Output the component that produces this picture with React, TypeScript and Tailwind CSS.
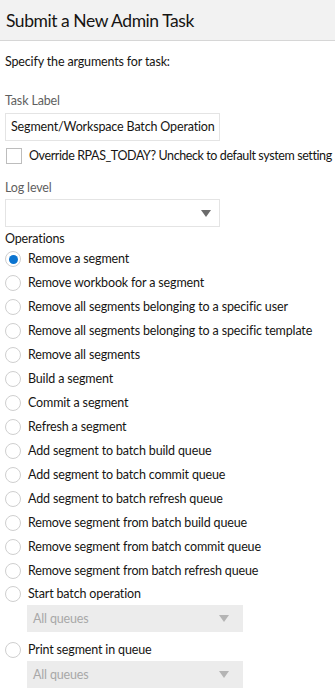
import { useState } from 'react'

const operations = [
  'Remove a segment',
  'Remove workbook for a segment',
  'Remove all segments belonging to a specific user',
  'Remove all segments belonging to a specific template',
  'Remove all segments',
  'Build a segment',
  'Commit a segment',
  'Refresh a segment',
  'Add segment to batch build queue',
  'Add segment to batch commit queue',
  'Add segment to batch refresh queue',
  'Remove segment from batch build queue',
  'Remove segment from batch commit queue',
  'Remove segment from batch refresh queue',
]

function Caret({ muted }: { muted?: boolean }) {
  return (
    <svg width="10" height="7" viewBox="0 0 10 7" className="shrink-0">
      <path d="M0 0 H10 L5 7 Z" fill={muted ? '#b4b4b4' : '#6b6b6b'} />
    </svg>
  )
}

function Radio({
  checked,
  label,
  onClick,
  tall = true,
}: {
  checked: boolean
  label: string
  onClick: () => void
  tall?: boolean
}) {
  return (
    <button type="button" onClick={onClick} className={`flex items-center text-left ${tall ? 'h-6' : 'h-[22px]'}`}>
      <span className="flex h-[16px] w-[16px] shrink-0 items-center justify-center rounded-full border border-[#cfcfcf] bg-white">
        {checked && <span className="h-[9px] w-[9px] rounded-full bg-[#0b74d0]" />}
      </span>
      <span className="ml-[7px] whitespace-nowrap text-[#161513]">{label}</span>
    </button>
  )
}

function SubSelect() {
  return (
    <div className="ml-[22px] flex h-[27px] w-[216px] items-center justify-between bg-[#ececec] pl-[6px] pr-[14px] text-[#a8a8a8]">
      <span>All queues</span>
      <Caret muted />
    </div>
  )
}

export default function App() {
  const [selected, setSelected] = useState(0)
  const [override, setOverride] = useState(false)

  return (
    <div className="h-[699px] w-[335px] overflow-hidden bg-white text-[12.5px] leading-[18px] tracking-[-0.15px] text-[#161513] [font-family:Lato,sans-serif]">
      <header className="flex h-[41px] items-center border-b border-[#d6d6d6] bg-[#f2f2f2] pl-[6px]">
        <h1 className="pt-[1px] text-[17.5px] font-normal tracking-[-0.45px] text-[#161513]">Submit a New Admin Task</h1>
      </header>

      <main className="pl-[5px]">
        <p className="mt-[12px]">Specify the arguments for task:</p>

        <p className="mt-[21px] text-[#5f5f5f]">Task Label</p>
        <div className="mt-[3px] flex h-[28px] w-[215px] items-center whitespace-nowrap border border-[#e4e4e4] pl-[5px]">
          Segment/Workspace Batch Operation
        </div>

        <label className="mt-[6px] flex h-[18px] items-center whitespace-nowrap">
          <button
            type="button"
            onClick={() => setOverride(!override)}
            className="ml-[1px] h-[16px] w-[16px] shrink-0 border border-[#bdbdbd] bg-white"
          />
          <span className="ml-[7px] tracking-[-0.4px]">Override RPAS_TODAY? Uncheck to default system setting</span>
        </label>

        <p className="mt-[14px] text-[#5f5f5f]">Log level</p>
        <div className="mt-[2px] flex h-[28px] w-[215px] items-center justify-end border border-[#e4e4e4] pr-[8px]">
          <Caret />
        </div>

        <p className="mt-[3px]">Operations</p>
        <div className="-mt-[1px] flex flex-col">
          {operations.map((op, i) => (
            <Radio key={op} checked={selected === i} label={op} onClick={() => setSelected(i)} />
          ))}
          <Radio
            checked={selected === 14}
            label="Start batch operation"
            tall={false}
            onClick={() => setSelected(14)}
          />
        </div>
        <SubSelect />
        <div className="mt-[7px]">
          <Radio
            checked={selected === 15}
            label="Print segment in queue"
            tall={false}
            onClick={() => setSelected(15)}
          />
        </div>
        <SubSelect />
      </main>
    </div>
  )
}
